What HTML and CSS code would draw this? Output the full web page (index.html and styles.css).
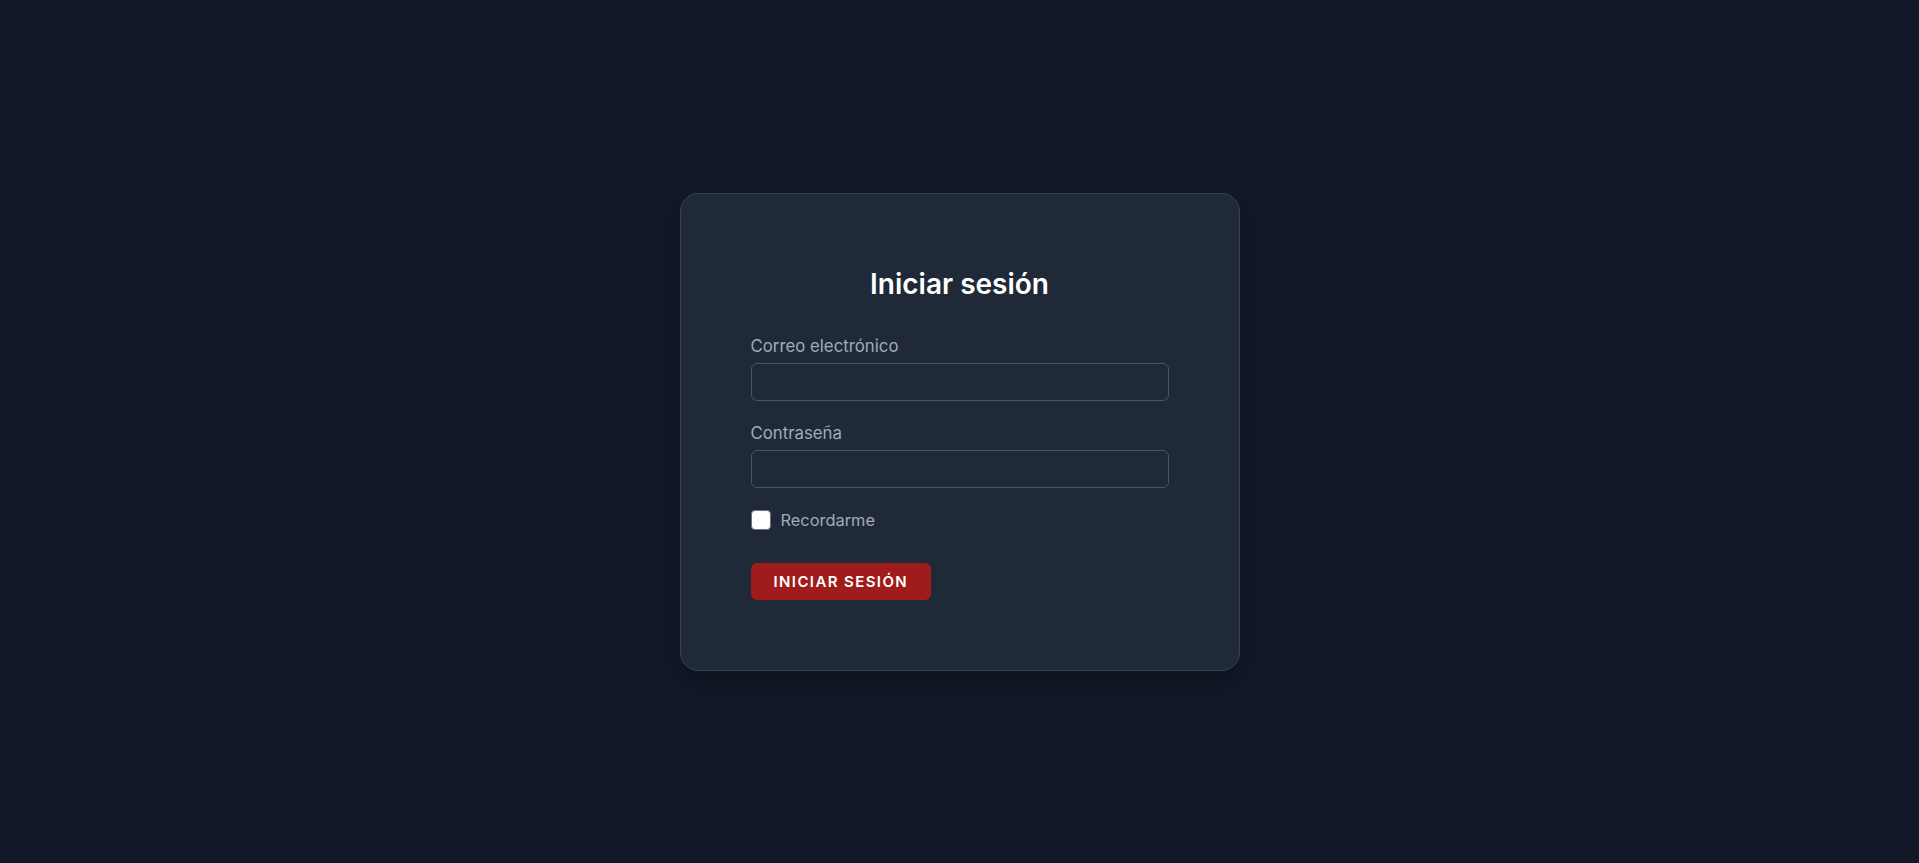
FILE: index.html
```html
<!DOCTYPE html>
<html lang="es">
<head>
    <meta charset="UTF-8">
    <meta name="viewport" content="width=device-width, initial-scale=1.0">
    <title>Iniciar sesión</title>
    <link rel="stylesheet" href="styles.css">
</head>
<body>
    <div class="login-card">
        <h1>Iniciar sesión</h1>
        <form class="login-form">
            <label for="email">Correo electrónico</label>
            <input type="email" id="email" name="email">
            <label for="password">Contraseña</label>
            <input type="password" id="password" name="password">
            <div class="remember">
                <input type="checkbox" id="remember" name="remember">
                <label for="remember">Recordarme</label>
            </div>
            <button type="submit">Iniciar sesión</button>
        </form>
    </div>
</body>
</html>
```

FILE: styles.css
```css
body {
    font-family: Inter, "Noto Sans", sans-serif;
    margin: 0;
    padding: 0;
    background-color: #111827;
    color: #a0abbb;
    min-height: 863px;
    display: flex;
    align-items: center;
    justify-content: center;
}
.login-card {
    width: 418px;
    padding: 70px;
    background-color: #1f2937;
    border: 1px solid #374151;
    border-radius: 18px;
    box-shadow: 0 10px 25px rgba(0, 0, 0, 0.25);
}
.login-card h1 {
    margin: 2px 0 32px;
    color: #ffffff;
    font-size: 28px;
    line-height: 36px;
    font-weight: 600;
    text-align: center;
}
.login-form {
    display: flex;
    flex-direction: column;
}
.login-form label {
    font-size: 16.8px;
    line-height: 24px;
    margin-bottom: 5px;
}
.login-form input[type="email"],
.login-form input[type="password"] {
    box-sizing: border-box;
    height: 38px;
    padding: 8px 12px;
    margin-bottom: 20px;
    background-color: #1f2937;
    border: 1px solid #4b5563;
    border-radius: 6px;
    color: #f3f4f6;
    font-family: inherit;
    font-size: 16px;
}
.remember {
    display: flex;
    align-items: center;
    gap: 10px;
}
.remember input {
    appearance: none;
    margin: 0;
    width: 20px;
    height: 20px;
    background-color: #ffffff;
    border: 1px solid #6b7280;
    border-radius: 4px;
}
.remember label {
    margin-bottom: 0;
    font-size: 16.4px;
}
.login-form button {
    align-self: flex-start;
    margin-top: 31px;
    padding: 8px 23px;
    background-color: #a01b1b;
    color: #ffffff;
    border: none;
    border-radius: 6px;
    font-family: inherit;
    font-size: 15px;
    line-height: 21px;
    font-weight: 600;
    letter-spacing: 1.4px;
    text-transform: uppercase;
    cursor: pointer;
}
```
